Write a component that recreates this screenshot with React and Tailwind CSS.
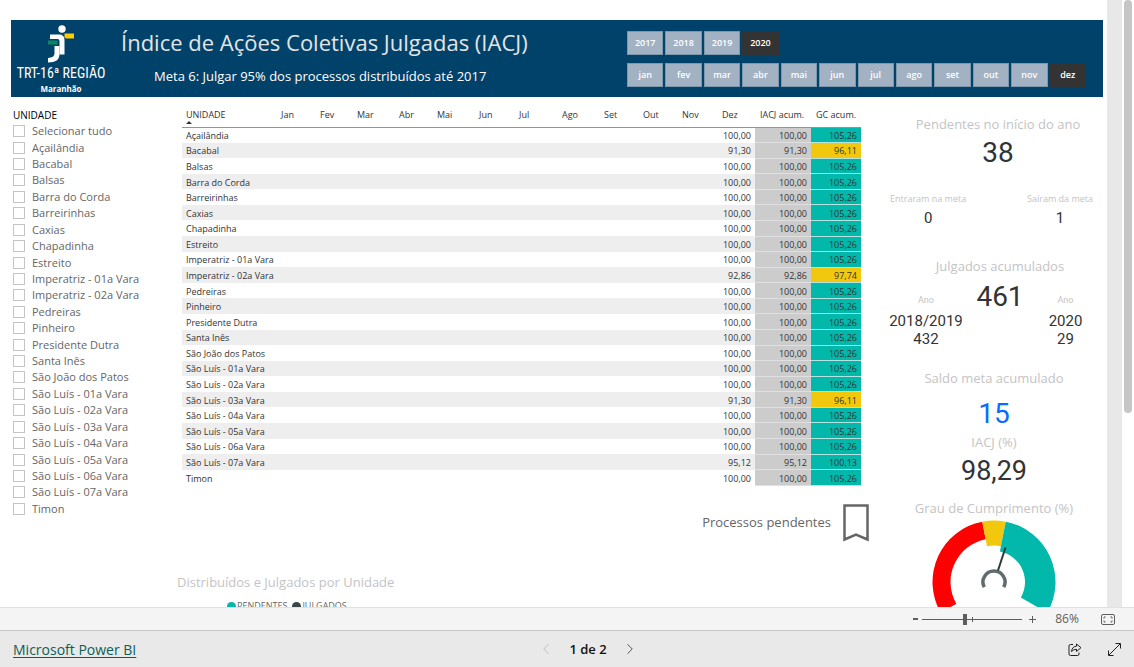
import { useState } from "react";
import { ChevronLeft, ChevronRight } from "lucide-react";

const units = [
  "Açailândia",
  "Bacabal",
  "Balsas",
  "Barra do Corda",
  "Barreirinhas",
  "Caxias",
  "Chapadinha",
  "Estreito",
  "Imperatriz - 01a Vara",
  "Imperatriz - 02a Vara",
  "Pedreiras",
  "Pinheiro",
  "Presidente Dutra",
  "Santa Inês",
  "São João dos Patos",
  "São Luís - 01a Vara",
  "São Luís - 02a Vara",
  "São Luís - 03a Vara",
  "São Luís - 04a Vara",
  "São Luís - 05a Vara",
  "São Luís - 06a Vara",
  "São Luís - 07a Vara",
  "Timon",
];

// units that differ from the usual 100,00 / 105,26
const results = {
  Bacabal: { iacj: "91,30", gc: "96,11", below: true },
  "Imperatriz - 02a Vara": { iacj: "92,86", gc: "97,74", below: true },
  "São Luís - 03a Vara": { iacj: "91,30", gc: "96,11", below: true },
  "São Luís - 07a Vara": { iacj: "95,12", gc: "100,13", below: false },
};

const years = ["2017", "2018", "2019", "2020"];
const months = ["jan", "fev", "mar", "abr", "mai", "jun", "jul", "ago", "set", "out", "nov", "dez"];

const columns = [
  { name: "Jan", width: "w-[39px]" },
  { name: "Fev", width: "w-[37px]" },
  { name: "Mar", width: "w-[42px]" },
  { name: "Abr", width: "w-[38px]" },
  { name: "Mai", width: "w-[42px]" },
  { name: "Jun", width: "w-[40px]" },
  { name: "Jul", width: "w-[43px]" },
  { name: "Ago", width: "w-[42px]" },
  { name: "Set", width: "w-[39px]" },
  { name: "Out", width: "w-[39px]" },
  { name: "Nov", width: "w-[40px]" },
  { name: "Dez", width: "w-[38px]" },
  { name: "IACJ acum.", width: "w-[56px]" },
  { name: "GC acum.", width: "w-[50px]" },
];

function Logo() {
  return (
    <div className="flex w-[100px] flex-col items-center pt-[5px] text-white">
      <svg width="28" height="38" viewBox="0 0 28 38" aria-hidden="true">
        <circle cx="15" cy="4" r="3.7" fill="#fff" />
        <path d="M3 9.500h9q5.500 0 5.500 5.500v14.500h-5V16q0-2-2-2H3z" fill="#fff" />
        <path d="M7.500 21h5v8q0 8.500-11.500 8.500v-4.500q6.500-.5 6.500-4.500z" fill="#fff" />
        <path d="M17.500 8.500h9.500v5h-7.500q-2 0-2-2z" fill="#ffcb05" />
        <path d="M1 15.500h9.500v4H1z" fill="#0c8563" />
      </svg>
      <span className="font-['Liberation_Sans_Narrow','Roboto_Condensed','Liberation_Sans',sans-serif] text-[14px] leading-[21px] whitespace-nowrap">
        TRT-16ª REGIÃO
      </span>
      <span className="text-[8px] leading-[9px] font-bold">Maranhão</span>
    </div>
  );
}

function SlicerRow({ options, selected, onSelect }) {
  return (
    <div className="grid grid-cols-12 gap-x-[2px]">
      {options.map((option) => (
        <button
          key={option}
          type="button"
          onClick={() => onSelect(option)}
          className={
            option === selected
              ? "h-6 bg-[#333333] text-[9px] font-semibold text-white"
              : "h-6 border border-[#7b98ad] bg-[#a3b2c3] text-[9px] font-semibold text-white"
          }
        >
          {option}
        </button>
      ))}
    </div>
  );
}

function Banner() {
  const [year, setYear] = useState("2020");
  const [month, setMonth] = useState("dez");

  return (
    <header className="flex h-[77px] bg-[#01426a]">
      <Logo />
      <div className="flex-1 pl-[10px] whitespace-nowrap">
        <h1 className="pt-[6px] text-[22px] leading-[32px] font-medium text-[#e4e4e4]">
          Índice de Ações Coletivas Julgadas (IACJ)
        </h1>
        <p className="pt-[8px] pl-[33px] text-[13px] leading-[20px] font-medium text-white">
          Meta 6: Julgar 95% dos processos distribuídos até 2017
        </p>
      </div>
      <div className="mr-[17px] flex w-[459px] flex-col gap-2 pt-[11px]">
        <SlicerRow options={years} selected={year} onSelect={setYear} />
        <SlicerRow options={months} selected={month} onSelect={setMonth} />
      </div>
    </header>
  );
}

function UnitFilter() {
  return (
    <fieldset className="w-[166px] pt-[10px] pl-[2px]">
      <legend className="float-left w-full text-[10px] leading-[16px] text-black">UNIDADE</legend>
      <div className="grid h-[394px] w-full auto-rows-fr">
        {["Selecionar tudo", ...units].map((unit) => (
          <label key={unit} className="flex items-center gap-[7px] text-[11px] leading-[16px] text-[#666666]">
            <input type="checkbox" className="size-3 appearance-none border border-[#c4c4c4] checked:bg-[#666666]" />
            {unit}
          </label>
        ))}
      </div>
    </fieldset>
  );
}

function UnitTable() {
  return (
    <table className="h-[380px] w-full table-fixed text-[9px] leading-[12px] text-[#333333]">
      <thead>
        <tr className="h-[21px] text-left align-top whitespace-nowrap">
          <th className="w-[94px] border-b border-[#3bbcb0] px-[4px] pt-[3px] font-normal">
            UNIDADE
            <svg width="6" height="3" viewBox="0 0 6 3" className="block" aria-hidden="true">
              <path d="M0 3L3 0l3 3z" fill="#333" />
            </svg>
          </th>
          {columns.map((column) => (
            <th key={column.name} className={`${column.width} border-b border-[#3bbcb0] px-[5px] pt-[3px] font-normal`}>
              {column.name}
            </th>
          ))}
        </tr>
      </thead>
      <tbody>
        {units.map((unit) => {
          const result = results[unit] || { iacj: "100,00", gc: "105,26", below: false };
          return (
            <tr key={unit} className="even:bg-[#eeeeee]">
              <td className="px-[4px] pt-[2px] whitespace-nowrap">{unit}</td>
              {columns.slice(0, 11).map((column) => (
                <td key={column.name}></td>
              ))}
              <td className="px-[4px] pt-[2px] text-right">{result.iacj}</td>
              <td className="border-b border-[#e0e0e0] bg-[#cccccc] px-[4px] pt-[2px] text-right">{result.iacj}</td>
              <td
                className={
                  result.below
                    ? "border-b border-[#b5e3df] bg-[#f2c80f] px-[4px] pt-[2px] text-right"
                    : "border-b border-[#b5e3df] bg-[#01b8aa] px-[4px] pt-[2px] text-right"
                }
              >
                {result.gc}
              </td>
            </tr>
          );
        })}
      </tbody>
    </table>
  );
}

// angles in degrees, 0 is straight up
function point(radius, angle) {
  const rad = (angle * Math.PI) / 180;
  return `${(62 + radius * Math.sin(rad)).toFixed(2)} ${(62 - radius * Math.cos(rad)).toFixed(2)}`;
}

function band(outer, inner, from, to) {
  return `M${point(outer, from)}A${outer} ${outer} 0 0 1 ${point(outer, to)}L${point(inner, to)}A${inner} ${inner} 0 0 0 ${point(inner, from)}Z`;
}

function Gauge() {
  return (
    <svg width="124" height="124" viewBox="0 0 124 124" className="mx-auto block" role="img" aria-label="Grau de Cumprimento">
      <path d={band(61.5, 43.5, -120, -11)} fill="#ff0000" />
      <path d={band(61.5, 36.5, -11, 11)} fill="#f2c80f" />
      <path d={band(61.5, 31, 11, 120)} fill="#01b8aa" />
      <path d={`M${point(11, -118)}A11 11 0 1 1 ${point(11, 118)}`} fill="none" stroke="#5f6b6d" strokeWidth="3.5" />
      <path d="M66 50.500L73.500 27.500" stroke="#2c3a3c" strokeWidth="2" />
    </svg>
  );
}

function KpiLabel({ children }) {
  return <h2 className="text-[13px] leading-[20px] whitespace-nowrap text-[#c4c4c4]">{children}</h2>;
}

function SmallLabel({ children }) {
  return <h3 className="text-[9px] leading-[12px] whitespace-nowrap text-[#c4c4c4]">{children}</h3>;
}

function Indicators() {
  return (
    <aside className="ml-4 w-[218px] pt-[17px] text-center text-[#333333]">
      <div className="pl-2">
        <KpiLabel>Pendentes no início do ano</KpiLabel>
        <p className="font-[Roboto,sans-serif] text-[28px] leading-[38px]">38</p>
      </div>
      <div className="mt-[21px] flex justify-between pr-[10px] pl-[5px]">
        <div>
          <SmallLabel>Entraram na meta</SmallLabel>
          <p className="mt-1 font-[Roboto,sans-serif] text-[15px] leading-[18px]">0</p>
        </div>
        <div>
          <SmallLabel>Saíram da meta</SmallLabel>
          <p className="mt-1 font-[Roboto,sans-serif] text-[15px] leading-[18px]">1</p>
        </div>
      </div>
      <div className="mt-[29px] pl-3">
        <KpiLabel>Julgados acumulados</KpiLabel>
      </div>
      <div className="grid grid-cols-[82px_66px_65px] font-[Roboto,sans-serif]">
        <div className="pt-[18px]">
          <SmallLabel>Ano</SmallLabel>
          <p className="mt-[6px] text-[15px] leading-[18px]">2018/2019</p>
          <p className="text-[15px] leading-[18px]">432</p>
        </div>
        <p className="text-[28px] leading-[42px]">461</p>
        <div className="pt-[18px]">
          <SmallLabel>Ano</SmallLabel>
          <p className="mt-[6px] text-[15px] leading-[18px]">2020</p>
          <p className="text-[15px] leading-[18px]">29</p>
        </div>
      </div>
      <div className="mt-5">
        <KpiLabel>Saldo meta acumulado</KpiLabel>
        <p className="mt-2 font-[Roboto,sans-serif] text-[28px] leading-[36px] text-[#0a6cff]">15</p>
        <KpiLabel>IACJ (%)</KpiLabel>
        <p className="font-[Roboto,sans-serif] text-[27px] leading-[38px]">98,29</p>
      </div>
      <div className="mt-2">
        <KpiLabel>Grau de Cumprimento (%)</KpiLabel>
        <div className="pt-[2px]">
          <Gauge />
        </div>
      </div>
    </aside>
  );
}

function Report() {
  return (
    <main className="flex min-h-0 flex-1 overflow-hidden">
      <div className="min-w-0 flex-1 overflow-hidden pt-5 pr-1 pl-[11px]">
        <Banner />
        <div className="flex">
          <UnitFilter />
          <section className="min-w-0 flex-1 pt-[9px]">
            <div className="pr-2 pl-[5px]">
              <UnitTable />
            </div>
            <div className="mt-[18px] flex items-center justify-end gap-3 text-[13px] text-[#666666]">
              <span>Processos pendentes</span>
              <button type="button" aria-label="Processos pendentes">
                <svg width="26" height="38" viewBox="0 0 26 38" className="block">
                  <path d="M1.500 1.500h23v34L13 30.500l-11.500 5z" fill="none" stroke="#666" strokeWidth="2.500" />
                </svg>
              </button>
            </div>
            <h2 className="mt-[30px] text-[13px] leading-[20px] text-[#c4c4c4]">Distribuídos e Julgados por Unidade</h2>
            <div className="mt-2 flex gap-[5px] pl-[50px] text-[9px] leading-[12px] text-[#666666]">
              <span className="flex items-center gap-px">
                <span className="size-[9px] rounded-full bg-[#01b8aa]"></span>
                PENDENTES
              </span>
              <span className="flex items-center gap-px">
                <span className="size-[9px] rounded-full bg-[#374649]"></span>
                JULGADOS
              </span>
            </div>
          </section>
          <Indicators />
        </div>
      </div>
      <div className="w-[15px] bg-[#e8e8e8]"></div>
      <div className="w-3 px-[2px]">
        <div className="h-[68%] rounded-full bg-[#c6c6c6]"></div>
      </div>
    </main>
  );
}

function ZoomBar() {
  const [zoom, setZoom] = useState(86);

  return (
    <div className="flex h-6 items-center justify-end border-y border-t-[#e1e1e1] border-b-[#c8c8c8] bg-[#f4f4f4] pr-[19px] text-[#605e5c]">
      <button type="button" aria-label="Reduzir" onClick={() => setZoom(zoom - 1)} className="flex w-[14px] justify-center">
        <svg width="5" height="2" viewBox="0 0 5 2">
          <path d="M0 1h5" stroke="currentColor" strokeWidth="2" />
        </svg>
      </button>
      <div className="relative flex h-4 w-[100px] items-center">
        <span className="absolute top-[6px] left-[50px] h-[5px] w-px bg-[#605e5c]"></span>
        <input
          type="range"
          aria-label="Zoom"
          min="0"
          max="200"
          value={zoom}
          onChange={(e) => setZoom(Number(e.target.value))}
          className="h-px w-full appearance-none bg-[#605e5c] [&::-webkit-slider-thumb]:h-[11px] [&::-webkit-slider-thumb]:w-1 [&::-webkit-slider-thumb]:appearance-none [&::-webkit-slider-thumb]:bg-[#605e5c]"
        />
      </div>
      <button type="button" aria-label="Ampliar" onClick={() => setZoom(zoom + 1)} className="flex w-5 justify-center">
        <svg width="7" height="7" viewBox="0 0 7 7">
          <path d="M0 3.500h7M3.500 0v7" stroke="currentColor" />
        </svg>
      </button>
      <span className="w-[50px] text-center text-[12px] leading-[16px]">{zoom}%</span>
      <button type="button" aria-label="Ajustar à página" className="ml-[9px]">
        <svg width="14" height="11" viewBox="0 0 14 11" fill="none" stroke="currentColor" className="block">
          <rect x=".5" y=".5" width="13" height="10" rx="1.500" />
          <path d="M3 4.500v-1.500h1.500M9.500 3h1.500v1.500M11 6.500v1.500h-1.500M4.500 8h-1.500v-1.500" />
        </svg>
      </button>
    </div>
  );
}

function Footer() {
  return (
    <footer className="grid h-9 grid-cols-3 items-center bg-[#e9e9e9] px-[13px]">
      <a href="#powerbi" className="pt-px text-[14px] leading-[20px] text-[#0b5e56] underline underline-offset-2">
        Microsoft Power BI
      </a>
      <nav className="flex items-center justify-center gap-[14px] pl-[42px]">
        <button type="button" aria-label="Página anterior" disabled>
          <ChevronLeft size={18} strokeWidth={1} className="text-[#b0b0b0]" />
        </button>
        <span className="text-[13px] leading-[20px] font-semibold text-[#111111]">1 de 2</span>
        <button type="button" aria-label="Próxima página">
          <ChevronRight size={18} strokeWidth={1} className="text-[#222222]" />
        </button>
      </nav>
      <div className="flex items-center justify-end gap-[26px] text-[#222222]">
        <button type="button" aria-label="Compartilhar">
          <svg width="14" height="13" viewBox="0 0 14 13" fill="none" stroke="currentColor" className="block">
            <path d="M5 1.500H2.500q-1.500 0-1.500 1.500v8q0 1.500 1.500 1.500h7q1.500 0 1.500-1.500V9.500" />
            <path d="M8.500 1l4.500 3.700-4.500 3.800V6.300Q5.500 6.200 3.500 8.500 4 3.500 8.500 3.200z" strokeLinejoin="round" />
          </svg>
        </button>
        <button type="button" aria-label="Tela cheia">
          <svg width="13" height="13" viewBox="0 0 13 13" fill="none" stroke="currentColor" className="block">
            <path d="M1 12L12 1M7.500 .5h5v5M.5 7.500v5h5" />
          </svg>
        </button>
      </div>
    </footer>
  );
}

export default function App() {
  return (
    <div className="flex h-screen flex-col overflow-hidden bg-white font-['Open_Sans','Noto_Sans',sans-serif]">
      <Report />
      <ZoomBar />
      <Footer />
    </div>
  );
}
